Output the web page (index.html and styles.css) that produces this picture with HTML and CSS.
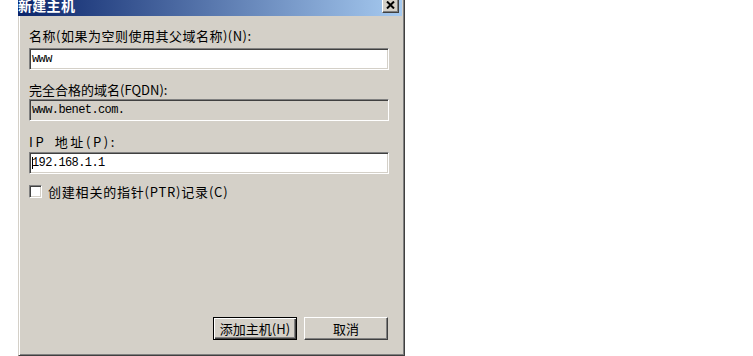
FILE: index.html
```html
<!DOCTYPE html>
<html lang="zh-CN">
<head>
<meta charset="utf-8">
<title>新建主机</title>
<link rel="stylesheet" href="styles.css">
</head>
<body>
<div class="dialog">
  <div class="titlebar">
    <span class="title">新建主机</span>
    <span class="close"><svg width="9" height="8" viewBox="0 0 9 8"><path d="M1 0.5 L8 7.5 M8 0.5 L1 7.5" stroke="#000" stroke-width="2" fill="none"/></svg></span>
  </div>
  <div class="content">
    <div class="lbl l1">名称(如果为空则使用其父域名称)(N):</div>
    <div class="field f1"><span class="val">www</span></div>
    <div class="lbl l2">完全合格的域名(FQDN):</div>
    <div class="field ro f2"><span class="val">www.benet.com.</span></div>
    <div class="lbl l3">IP 地址(P):</div>
    <div class="field f3"><span class="caret"></span><span class="val">192.168.1.1</span></div>
    <div class="check"><span class="box"></span><span class="clbl">创建相关的指针(PTR)记录(C)</span></div>
    <div class="buttons">
      <span class="btn default"><span class="btn-in">添加主机(H)</span></span>
      <span class="btn"><span class="btn-in">取消</span></span>
    </div>
  </div>
</div>
</body>
</html>
```

FILE: styles.css
```css
html, body {
  margin: 0;
  padding: 0;
  background: #ffffff;
  overflow: hidden;
}
body {
  width: 753px;
  height: 356px;
  font-family: "Noto Sans CJK SC", "Noto Sans", sans-serif;
  font-size: 13px;
  color: #000;
}
.dialog {
  box-sizing: border-box;
  margin-left: 18px;
  margin-top: -4px;
  width: 387px;
  height: 360px;
  background: #d4d0c8;
  border: 1px solid;
  border-color: #d4d0c8 #404040 #404040 #d4d0c8;
  box-shadow: inset 1px 1px #ffffff, inset -1px -1px #808080;
  padding: 2px;
  display: flex;
  flex-direction: column;
}
.titlebar {
  height: 17px;
  margin-left: -3px;
  background: linear-gradient(to right, #0a246a, #a6caf0);
  display: flex;
  align-items: flex-start;
  justify-content: space-between;
}
.title {
  color: #fff;
  font-weight: bold;
  font-size: 14px;
  line-height: 14px;
  margin-top: -1px;
  letter-spacing: 0.3px;
}
.close {
  box-sizing: border-box;
  width: 17px;
  height: 14px;
  margin-right: 3px;
  background: #d4d0c8;
  border: 1px solid;
  border-color: #ffffff #404040 #404040 #ffffff;
  box-shadow: inset -1px -1px #808080;
  display: flex;
  align-items: flex-start;
  justify-content: center;
  padding-top: 1px;
}
.content {
  flex: 1;
  display: flex;
  flex-direction: column;
  padding: 0 13px 13px 8px;
}
.lbl {
  line-height: 15px;
  white-space: nowrap;
}
.l1 { margin-top: 12px; letter-spacing: 0.5px; }
.l2 { margin-top: 12px; }
.l3 { margin-top: 13px; letter-spacing: 2.6px; word-spacing: 3px; }
.field {
  position: relative;
  box-sizing: border-box;
  height: 22px;
  background: #ffffff;
  border: 1px solid;
  border-color: #808080 #ffffff #ffffff #808080;
  box-shadow: inset 1px 1px #404040, inset -1px -1px #d4d0c8;
  display: flex;
  align-items: center;
  padding-left: 2px;
  font-family: "Liberation Mono", monospace;
  font-size: 12px;
  letter-spacing: -0.6px;
}
.f1 { margin-top: 5px; }
.f2 { margin-top: 2px; }
.f3 { margin-top: 3px; }
.ro { background: #d4d0c8; }
.val { line-height: 14px; }
.caret {
  position: absolute;
  left: 2px;
  top: 4px;
  width: 1px;
  height: 12px;
  background: #000;
}
.check {
  margin-top: 11px;
  display: flex;
  align-items: center;
  height: 13px;
}
.box {
  box-sizing: border-box;
  width: 13px;
  height: 13px;
  background: #fff;
  border: 1px solid;
  border-color: #808080 #ffffff #ffffff #808080;
  box-shadow: inset 1px 1px #404040, inset -1px -1px #d4d0c8;
  margin-right: 6px;
}
.clbl {
  line-height: 15px;
  letter-spacing: 0.8px;
}
.buttons {
  margin-top: auto;
  display: flex;
  justify-content: flex-end;
  gap: 7px;
  margin-right: 1px;
}
.btn {
  box-sizing: border-box;
  width: 84px;
  height: 23px;
  background: #d4d0c8;
  border: 1px solid;
  border-color: #ffffff #404040 #404040 #ffffff;
  box-shadow: inset -1px -1px #808080;
  display: flex;
  align-items: center;
  justify-content: center;
}
.btn.default {
  border: 1px solid #000;
  box-shadow: inset 1px 1px #ffffff, inset -1px -1px #404040, inset -2px -2px #808080;
}
.btn-in {
  line-height: 15px;
}
```
